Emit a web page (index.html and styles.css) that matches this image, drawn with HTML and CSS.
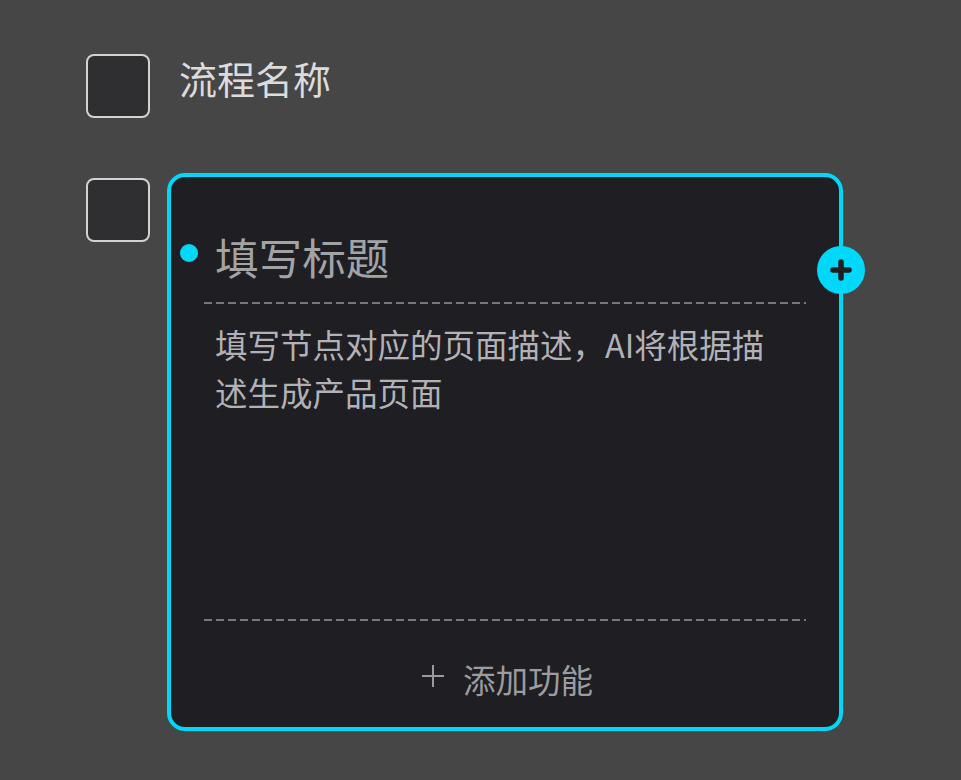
FILE: index.html
```html
<!DOCTYPE html>
<html lang="zh">
<head>
<meta charset="utf-8">
<link rel="stylesheet" href="styles.css">
</head>
<body>
<div class="page">
  <div class="row row-name">
    <div class="check"></div>
    <div class="flow-name">流程名称</div>
  </div>
  <div class="row row-node">
    <div class="check check-node"></div>
    <div class="card">
      <div class="card-head">
        <span class="dot"></span>
        <span class="card-title">填写标题</span>
      </div>
      <div class="dash"></div>
      <div class="card-desc">填写节点对应的页面描述，AI将根据描述生成产品页面</div>
      <div class="dash"></div>
      <div class="card-foot">
        <svg class="plus-thin" width="24" height="24" viewBox="0 0 24 24"><path d="M12 1v22M1 12h22" stroke="#9a9a9c" stroke-width="2" fill="none"/></svg>
        <span>添加功能</span>
      </div>
      <div class="add-btn">
        <svg width="22" height="22" viewBox="0 0 22 22"><path d="M11 3v16M3 11h16" stroke="#1e1e23" stroke-width="5.5" stroke-linecap="round" fill="none"/></svg>
      </div>
    </div>
  </div>
</div>
</body>
</html>
```

FILE: styles.css
```css
html, body {
  margin: 0;
  padding: 0;
  background: #464646;
  font-family: "Noto Sans CJK SC", "Noto Sans", sans-serif;
}
.page {
  padding: 54px 0 0 86px;
}
.row {
  display: flex;
  align-items: flex-start;
}
.row-name {
  gap: 29px;
}
.row-node {
  margin-top: 55px;
  gap: 17px;
}
.check {
  width: 60px;
  height: 60px;
  border: 2px solid #d2d2d2;
  border-radius: 8px;
  background: #2f2f31;
  flex: none;
}
.check-node {
  margin-top: 5px;
}
.flow-name {
  font-size: 38px;
  line-height: 48px;
  color: #dcdcdc;
}
.card {
  position: relative;
  border: 4px solid #00d8fa;
  border-radius: 18px;
  background: #1e1e23;
  padding: 0 33px;
  box-sizing: border-box;
  width: 676px;
  height: 558px;
  display: flex;
  flex-direction: column;
}
.card-head {
  display: flex;
  align-items: center;
  gap: 17px;
  margin: 49px 0 0 -24px;
  padding-bottom: 16px;
}
.dot {
  width: 18px;
  height: 18px;
  border-radius: 50%;
  background: #00d8fa;
  flex: none;
  margin-top: -7px;
}
.card-title {
  font-size: 43.6px;
  line-height: 60px;
  color: #a3a3a6;
}
.dash {
  height: 2px;
  flex: none;
  background-image: linear-gradient(to right, #78787a 8px, transparent 8px);
  background-size: 12px 2px;
}
.card-desc {
  flex: 1;
  padding: 16px 30px 0 11px;
  font-size: 32.5px;
  line-height: 48px;
  color: #b2b2b6;
}
.card-foot {
  height: 106px;
  display: flex;
  align-items: center;
  justify-content: center;
  gap: 18px;
  padding-top: 8px;
  box-sizing: border-box;
  font-size: 32.5px;
  color: #9c9c9f;
}
.plus-thin {
  flex: none;
  margin: -4px 0 0 4px;
}
.add-btn {
  position: absolute;
  top: 69px;
  right: -26px;
  width: 48px;
  height: 48px;
  border-radius: 50%;
  background: #00d8fa;
  display: flex;
  align-items: center;
  justify-content: center;
}
```
